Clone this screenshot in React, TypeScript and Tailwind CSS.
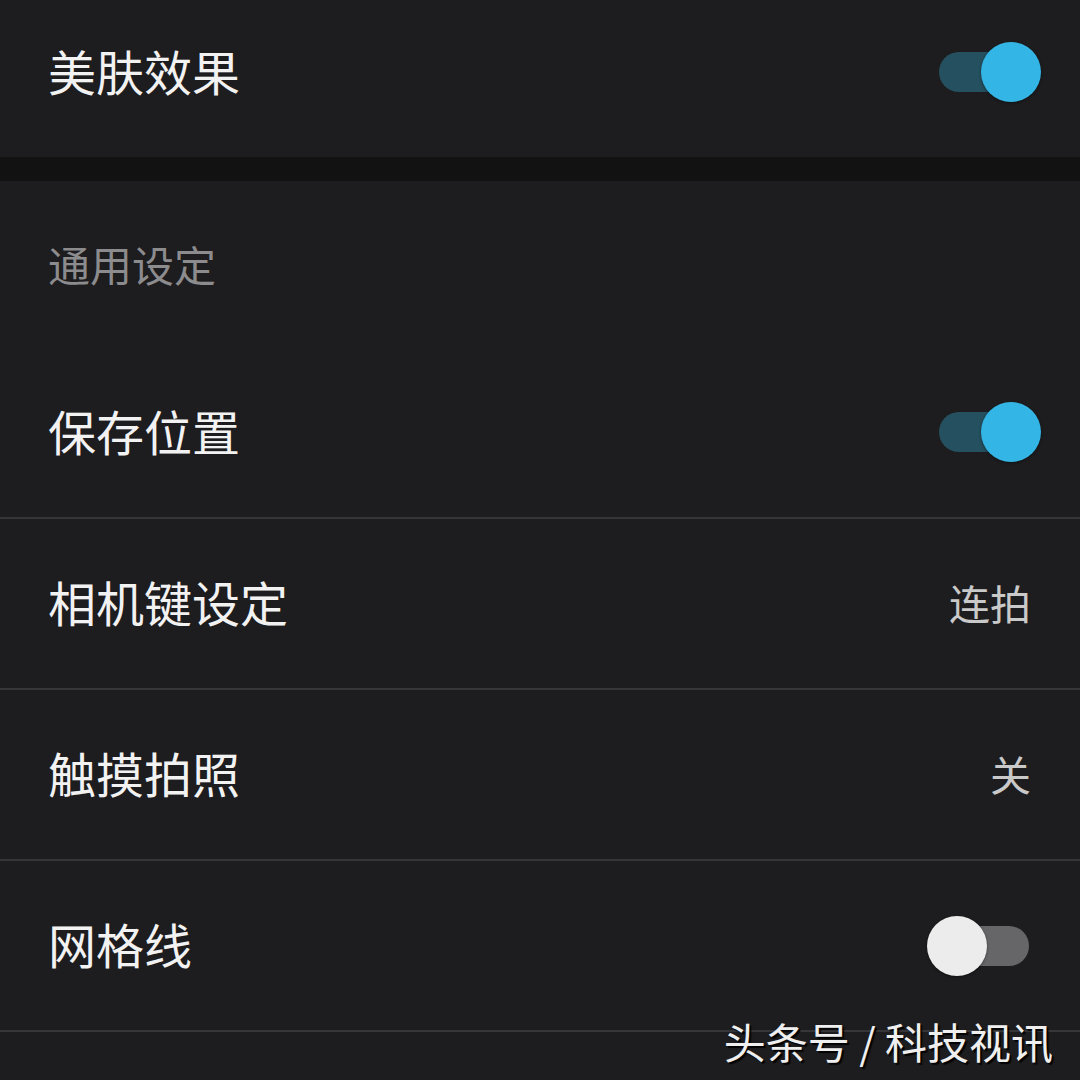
import React from "react";

const FONT = { fontFamily: '"Noto Sans CJK SC", "Noto Sans", sans-serif' };

function Toggle({ on }: { on: boolean }) {
  return (
    <div
      className={`relative w-[90px] h-[40px] rounded-full ${on ? "bg-[#24505f]" : "bg-[#666567]"}`}
    >
      <div
        className={`absolute top-[-10px] w-[60px] h-[60px] rounded-full ${
          on ? "right-[-12px] bg-[#33b5e5]" : "left-[-12px] bg-[#ececec]"
        } shadow-[0_1px_3px_rgba(0,0,0,0.4)]`}
      />
    </div>
  );
}

function Row({
  title,
  right,
  h,
}: {
  title: string;
  right: React.ReactNode;
  h: string;
}) {
  return (
    <div className={`flex items-center justify-between pl-[48px] pr-[51px] ${h}`}>
      <span className="text-[48px] leading-[56px] mb-[5px] text-[#f2f2f2]">{title}</span>
      {right}
    </div>
  );
}

function Value({ text }: { text: string }) {
  return (
    <span className="text-[41px] leading-[48px] mb-[4px] mr-[-2px] text-[#c9c9c9]">{text}</span>
  );
}

function Divider() {
  return <div className="h-[2px] bg-[#363537]" />;
}

export default function App() {
  return (
    <div
      className="relative w-[1080px] h-[1080px] overflow-hidden bg-[#1d1c1e]"
      style={FONT}
    >
      <div className="flex items-center justify-between pl-[48px] pr-[51px] h-[157px] pb-[13px]">
        <span className="text-[48px] leading-[56px] mb-[5px] text-[#f2f2f2]">美肤效果</span>
        <Toggle on />
      </div>
      <div className="h-[24px] bg-[#131213]" />
      <div className="h-[166px] pt-[62px] pl-[48px]">
        <span className="block text-[42px] leading-[42px] text-[#8c8b8d]">通用设定</span>
      </div>
      <Row title="保存位置" h="h-[170px]" right={<Toggle on />} />
      <Divider />
      <Row title="相机键设定" h="h-[169px]" right={<Value text="连拍" />} />
      <Divider />
      <Row title="触摸拍照" h="h-[169px]" right={<Value text="关" />} />
      <Divider />
      <Row title="网格线" h="h-[169px]" right={<Toggle on={false} />} />
      <Divider />
      <div className="h-[60px]" />

      <div className="absolute right-[27px] bottom-[15px] text-[42px] leading-[48px] text-[#efefef] [text-shadow:2px_2px_1px_rgba(0,0,0,0.9)]">
        头条号 / 科技视讯
      </div>
    </div>
  );
}
